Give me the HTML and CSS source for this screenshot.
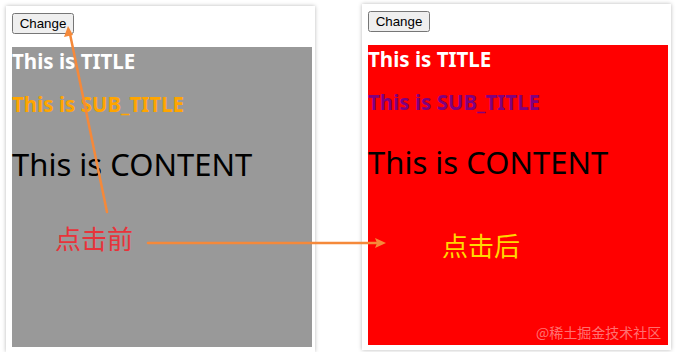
FILE: index.html
```html
<!DOCTYPE html>
<html lang="en">
<head>
    <meta charset="UTF-8">
    <meta name="viewport" content="width=device-width, initial-scale=1.0">
    <title>Change demo</title>
    <link rel="stylesheet" href="styles.css">
</head>
<body>

<div class="compare">
    <div class="card card-before">
        <button class="change-button">Change</button>
        <div class="box box-before">
            <div class="title">This is TITLE</div>
            <div class="sub-title">This is SUB_TITLE</div>
            <div class="content">This is CONTENT</div>
        </div>
    </div>

    <div class="card card-after">
        <button class="change-button">Change</button>
        <div class="box box-after">
            <div class="title">This is TITLE</div>
            <div class="sub-title">This is SUB_TITLE</div>
            <div class="content">This is CONTENT</div>
        </div>
    </div>
</div>

<!-- Annotations -->
<div class="note note-before">点击前</div>
<div class="note note-after">点击后</div>
<div class="watermark">@稀土掘金技术社区</div>

<svg class="arrows" width="676" height="356" viewBox="0 0 676 356">
    <g stroke="#f5893a" stroke-width="2.5" fill="none" stroke-linecap="round">
        <line x1="107" y1="212" x2="70" y2="34"/>
        <line x1="148" y1="243" x2="377" y2="243"/>
    </g>
    <g fill="#f5893a">
        <polygon points="68,26 64,37 73,35"/>
        <polygon points="386,243 375,238 377,243 375,248"/>
    </g>
</svg>

</body>
</html>
```

FILE: styles.css
```css
body {
    margin: 0;
    padding: 0;
    background-color: #fff;
    font-family: "Noto Sans", "Open Sans", sans-serif;
}
.compare {
    display: flex;
    align-items: flex-start;
    gap: 47px;
    padding: 4px 0 0 6px;
}
.card {
    background-color: #fff;
    padding: 7px 3px 5px 6px;
    box-shadow: 0 0 4px rgba(0, 0, 0, 0.28);
}
.card-before {
    margin-top: 2px; /* left shot sits a bit lower */
}
.change-button {
    display: block;
    font-family: "Liberation Sans", Arial, sans-serif;
    font-size: 13.33px;
    height: 21px;
    width: 62px;
    padding: 0;
    margin-bottom: 13px;
}
.box {
    width: 300px;
    height: 300px;
    padding-top: 1px;
    box-sizing: border-box;
}
.box-before {
    background-color: #999;
}
.box-after {
    background-color: #f00;
}
.title {
    color: #fff;
    font-weight: bold;
    font-size: 20.5px;
    line-height: 26px;
}
.sub-title {
    font-weight: bold;
    font-size: 20.5px;
    line-height: 26px;
    margin-top: 17px;
}
.box-before .sub-title {
    color: #ffa500;
}
.box-after .sub-title {
    color: purple;
}
.content {
    color: #000;
    font-size: 31px;
    line-height: 40px;
    margin-top: 27px;
}
.note {
    position: absolute;
    font-family: "Noto Sans CJK SC", sans-serif;
    font-size: 26px;
    line-height: 30px;
}
.note-before {
    left: 55px;
    top: 223px;
    color: #e8333a;
}
.note-after {
    left: 442px;
    top: 230px;
    color: #ffd800;
}
.watermark {
    position: absolute;
    left: 536px;
    top: 322px;
    font-family: "Noto Sans CJK SC", sans-serif;
    font-size: 14px;
    color: rgba(255, 255, 255, 0.45);
}
.arrows {
    position: absolute;
    top: 0;
    left: 0;
    pointer-events: none;
}
```
